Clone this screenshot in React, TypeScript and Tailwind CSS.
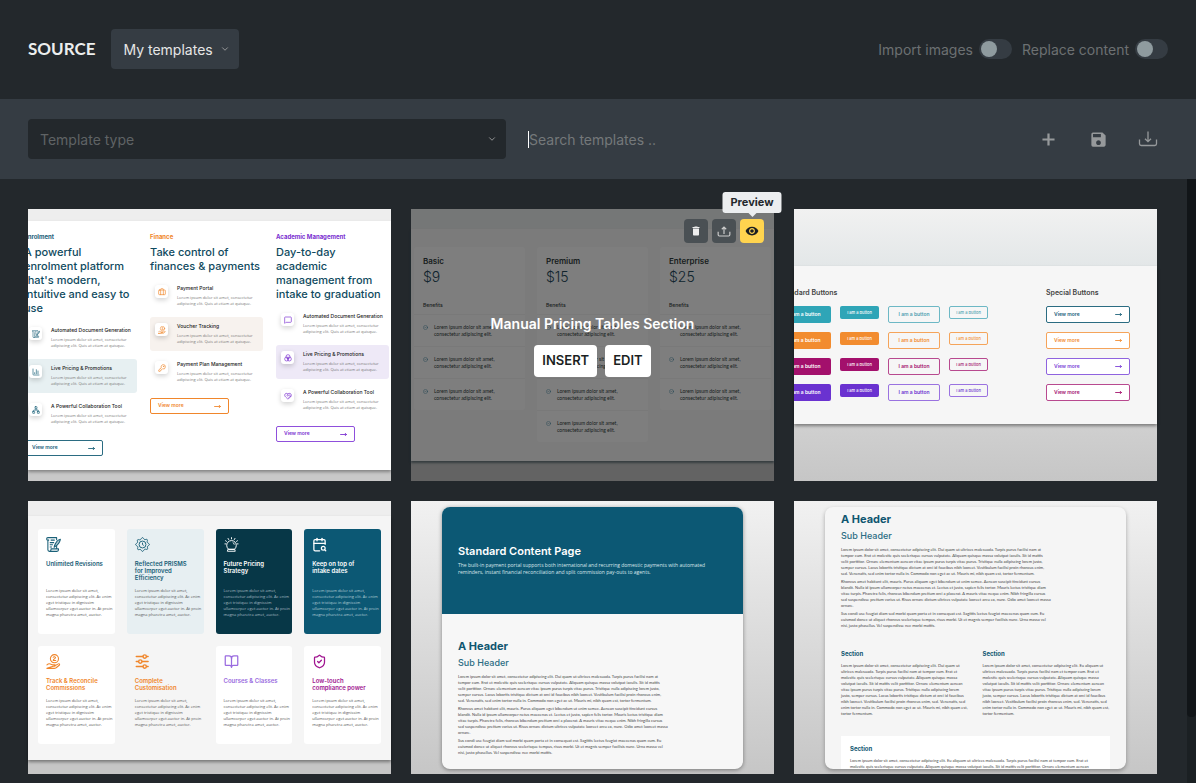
import type { ComponentType, ReactNode } from "react"
import {
  BookOpen,
  Briefcase,
  CalendarSearch,
  ChartColumn,
  ChevronDown,
  CircleCheck,
  HeartHandshake,
  KeyRound,
  MessageSquare,
  MoveRight,
  Network,
  ShieldCheck,
} from "lucide-react"
import { MdDelete, MdSave, MdVisibility } from "react-icons/md"

type Icon = ComponentType<{ className?: string }>

/* ---------- Icons ---------- */

function Plus({ className }: { className?: string }) {
  return (
    <svg viewBox="0 0 14 14" fill="none" stroke="currentColor" strokeWidth="2.4" className={className}>
      <path d="M7 .5v13M.5 7h13" />
    </svg>
  )
}

function TrayDown({ className }: { className?: string }) {
  return (
    <svg viewBox="0 0 20 16" fill="none" stroke="currentColor" strokeWidth="1.3" className={className}>
      <path d="M1.5 8.5v4.3c0 1 .6 1.7 1.7 1.7h13.6c1.1 0 1.7-.7 1.7-1.7V8.5" />
      <path d="M10 .5v10M7 7.700l3 3 3-3" />
    </svg>
  )
}

function TrayUp({ className }: { className?: string }) {
  return (
    <svg viewBox="0 0 20 16" fill="none" stroke="currentColor" strokeWidth="1.7" className={className}>
      <path d="M1.5 8.5v4.3c0 1 .6 1.7 1.7 1.7h13.6c1.1 0 1.7-.7 1.7-1.7V8.5" />
      <path d="M10 11.5V1.5M6.8 4.7 10 1.5l3.2 3.2" />
    </svg>
  )
}

function SheetPen({ className }: { className?: string }) {
  return (
    <svg viewBox="0 0 24 24" fill="none" stroke="currentColor" strokeWidth="1.7" strokeLinejoin="round" className={className}>
      <path d="M17 5V1H3C1.700 1 1 1.800 1 3s.8 2 2 2v15.500c0 1.400 1 2.500 2.500 2.500H17.500c1.500 0 2.500-1 2.500-2.500V19H8v1.500C8 22 7 23 5.500 23" />
      <path d="M17 19v-5M3 5h2M7.500 5H14M6 9h7M6 12.500h5M6 16h3.500" />
      <path d="M23 3.500c-3.500.5-7.500 5.500-9.500 10.500l-.5 2.500 2-1.500c4-2.500 7.500-7.500 8-11.500z" fill="currentColor" fillOpacity="0.35" />
    </svg>
  )
}

function HandCoin({ className }: { className?: string }) {
  return (
    <svg viewBox="0 0 24 24" fill="none" stroke="currentColor" strokeWidth="1.7" strokeLinecap="round" strokeLinejoin="round" className={className}>
      <circle cx="13.500" cy="7.500" r="6.500" />
      <path d="M11.500 5.200c.8-1 3.500-1 3.700.6.2 1.400-3.400 2-3.600 4.500h4" />
      <path d="M1.500 17.500c2-2 4.500-2.300 6.500-1l2 .8h3.500c1.800 0 1.800 2.400 0 2.400H10M14.800 18.500l5-2.700c1.600-.7 2.700 1 1.400 2.200l-5 4c-1 .7-2 1-3.200 1H1.500z" />
    </svg>
  )
}

function GearClock({ className }: { className?: string }) {
  return (
    <svg viewBox="0 0 24 24" fill="none" stroke="currentColor" strokeWidth="1.5" strokeLinejoin="round" className={className}>
      <path d="M12 1c1.500 0 2 2.600 3.200 3.100s3.200-1 4.300 0 -.5 3.100 0 4.300S23 10.500 23 12s-2.600 2-3.100 3.200 1 3.200 0 4.300-3.100-.5-4.300 0S13.500 23 12 23s-2-2.600-3.200-3.100-3.200 1-4.300 0 .5-3.100 0-4.300S1 13.500 1 12s2.600-2 3.100-3.200-1-3.200 0-4.300 3.100.5 4.300 0S10.500 1 12 1z" />
      <circle cx="12" cy="12" r="5.500" />
      <path d="M12 9v3.200l2 1.300" />
    </svg>
  )
}

function CrystalBall({ className }: { className?: string }) {
  return (
    <svg viewBox="0 0 24 24" fill="none" stroke="currentColor" strokeWidth="1.5" strokeLinecap="round" className={className}>
      <path d="M7 19.500a7.800 7.800 0 1 1 10 0z" />
      <path d="M6 22.800h12l-1-3.300H7zM12 1v2M6.500 2.300l1 1.800M17.500 2.300l-1 1.800M2.500 6l1.500 1M21.500 6 20 7M1.500 11H3M22.500 11H21M14.500 9c1 .5 1.600 1.300 1.800 2.500" />
    </svg>
  )
}

function Sliders({ className }: { className?: string }) {
  return (
    <svg viewBox="0 0 24 24" fill="none" stroke="currentColor" strokeWidth="2.2" strokeLinecap="round" className={className}>
      <path d="M2 4h10.500M18.500 4H21M2 12h3.500M11.500 12H21M2 20h10.500M18.500 20H21" />
      <circle cx="15.500" cy="4" r="2.700" />
      <circle cx="8.500" cy="12" r="2.700" />
      <circle cx="15.500" cy="20" r="2.700" />
    </svg>
  )
}

function Circles({ className }: { className?: string }) {
  return (
    <svg viewBox="0 0 24 24" fill="none" stroke="currentColor" strokeWidth="2" className={className}>
      <circle cx="12" cy="8" r="6" />
      <circle cx="8" cy="15" r="6" />
      <circle cx="16" cy="15" r="6" />
    </svg>
  )
}

/* ---------- Shared bits ---------- */

function Lines({ lines, className }: { lines: string[]; className?: string }) {
  return (
    <p className={className}>
      {lines.map((line) => (
        <span key={line} className="block whitespace-nowrap">
          {line}
        </span>
      ))}
    </p>
  )
}

function ViewMore({ className }: { className: string }) {
  return (
    <span className={`flex items-center justify-between rounded-[2px] border bg-white px-[7px] text-[5px] font-semibold ${className}`}>
      View more
      <MoveRight className="size-[7px]" strokeWidth={3} />
    </span>
  )
}

function Thumb({ children, className = "" }: { children: ReactNode; className?: string }) {
  return (
    <article className={`relative flex aspect-[4/3] flex-col bg-linear-to-b from-[#f1f1f1] to-[#c6c6c6] ${className}`}>
      {children}
    </article>
  )
}

/* ---------- Portal features ---------- */

const features = [
  {
    label: "Enrolment",
    heading: ["A powerful", "enrolment platform", "that's modern,", "intuitive and easy to", "use"],
    text: "text-[#1a6078]",
    border: "border-[#2b6c82]",
    active: "bg-[#e7f0f2]",
    items: [
      { title: "Automated Document Generation", icon: SheetPen as Icon },
      { title: "Live Pricing & Promotions", icon: ChartColumn as Icon },
      { title: "A Powerful Collaboration Tool", icon: Network as Icon },
    ],
  },
  {
    label: "Finance",
    heading: ["Take control of", "finances & payments"],
    text: "text-[#f0862b]",
    border: "border-[#f0862b]",
    active: "bg-[#f7f2ee]",
    items: [
      { title: "Payment Portal", icon: Briefcase as Icon },
      { title: "Voucher Tracking", icon: HandCoin as Icon },
      { title: "Payment Plan Management", icon: KeyRound as Icon },
    ],
  },
  {
    label: "Academic Management",
    heading: ["Day-to-day", "academic", "management from", "intake to graduation"],
    text: "text-[#7a2fd0]",
    border: "border-[#8f4fdc]",
    active: "bg-[#eee9f7]",
    items: [
      { title: "Automated Document Generation", icon: MessageSquare as Icon },
      { title: "Live Pricing & Promotions", icon: Circles as Icon },
      { title: "A Powerful Collaboration Tool", icon: HeartHandshake as Icon },
    ],
  },
]

function FeaturesThumb() {
  return (
    <Thumb>
      <div className="flex h-full flex-col overflow-hidden bg-[#c8c8c8] pb-[11px]">
        <div className="h-3 bg-[#eee]" />
        <div className="flex-1 bg-white pt-3 shadow-[0_2px_3px_rgba(0,0,0,0.35)]">
          <div className="-ml-1 mr-[2px] grid grid-cols-3 gap-[13px]">
            {features.map((col) => (
              <section key={col.label} className="min-w-0">
                <p className={`text-[6px] leading-[8px] font-bold ${col.text}`}>{col.label}</p>
                <h3 className="mt-1 text-[11px] leading-[14px] font-medium whitespace-nowrap text-[#0f4a60]">
                  {col.heading.map((line) => (
                    <span key={line} className="block">
                      {line}
                    </span>
                  ))}
                </h3>
                <ul className="mt-[6px] flex flex-col gap-1">
                  {col.items.map(({ title, icon: ItemIcon }, i) => (
                    <li key={title} className={`flex h-[34px] gap-[9px] rounded-[3px] pt-[6px] pl-[5px] ${i === 1 ? col.active : ""}`}>
                      <span className={`flex size-[13px] shrink-0 items-center justify-center rounded-[3px] bg-white shadow-[0_2px_5px_rgba(0,0,0,0.18)] ${col.text}`}>
                        <ItemIcon className="size-[8px]" />
                      </span>
                      <div>
                        <h4 className="text-[5px] leading-[6px] font-medium whitespace-nowrap text-[#222]">{title}</h4>
                        <Lines
                          className="mt-[4px] font-['Open_Sans',sans-serif] text-[4px] leading-[6px] text-[#777]"
                          lines={["Lorem ipsum dolor sit amet, consectetur", "adipiscing elit. Quis at etiam at quisque."]}
                        />
                      </div>
                    </li>
                  ))}
                </ul>
                <ViewMore className={`mt-[9px] h-4 w-[79px] ${col.text} ${col.border}`} />
              </section>
            ))}
          </div>
        </div>
      </div>
    </Thumb>
  )
}

/* ---------- Pricing tables, shown hovered ---------- */

const plans = [
  { name: "Basic", price: "$9", rows: [1, 2, 3] },
  { name: "Premium", price: "$15", rows: [1, 2, 3, 4] },
  { name: "Enterprise", price: "$25", rows: [1, 2, 3] },
]

function PricingThumb() {
  return (
    <Thumb>
      <div className="flex h-full flex-col bg-[#c6c6c6] pb-5">
        <div className="h-5 bg-[#ebeeee]" />
        <div className="grid flex-1 grid-cols-3 items-start gap-3 bg-[#f7f7f7] px-[3px] pt-[18px] shadow-[0_2px_2px_rgba(20,50,60,0.5)]">
          {plans.map((plan) => (
            <section key={plan.name} className="rounded-[3px] bg-[#fcfcfc]">
              <div className="h-[67px] px-[9px] pt-[9px]">
                <h3 className="text-[8px] leading-[10px] font-semibold text-[#333c40]">{plan.name}</h3>
                <p className="mt-1 text-[14px] leading-[14px] font-light text-[#23485a]">{plan.price}</p>
                <p className="mt-[18px] text-[5px] leading-[6px] font-medium text-[#333c40]">Benefits</p>
              </div>
              <ul>
                {plan.rows.map((row) => (
                  <li key={row} className="flex h-8 gap-[6px] border-t border-[#f3f3f3] px-[9px] pt-[9px]">
                    <CircleCheck className="mt-[1px] size-[5px] shrink-0 text-[#3b82a0]" />
                    <Lines
                      className="font-[Lato,sans-serif] text-[5px] leading-[7px] text-[#333c40]"
                      lines={["Lorem ipsum dolor sit amet,", "consectetur adipiscing elit."]}
                    />
                  </li>
                ))}
              </ul>
            </section>
          ))}
        </div>
      </div>

      {/* Hover overlay */}
      <div className="absolute inset-0 flex flex-col items-center bg-black/50 pt-[105px]">
        <h2 className="text-[14px] leading-5 font-semibold text-white">Manual Pricing Tables Section</h2>
        <div className="mt-[11px] flex gap-2">
          <button type="button" className="h-8 rounded-[4px] bg-white px-2 text-[13px] font-semibold text-[#1b1f22]">
            INSERT
          </button>
          <button type="button" className="h-8 rounded-[4px] bg-white px-2 text-[13px] font-semibold text-[#1b1f22]">
            EDIT
          </button>
        </div>
      </div>
      <div className="absolute top-[10px] right-[10px] flex gap-1">
        <button type="button" aria-label="Delete" className="flex size-6 items-center justify-center rounded-[4px] bg-[#4a5054] text-[#eee]">
          <MdDelete className="size-3" />
        </button>
        <button type="button" aria-label="Export" className="flex size-6 items-center justify-center rounded-[4px] bg-[#4a5054] text-[#ccc]">
          <TrayUp className="h-[11px] w-[14px]" />
        </button>
        <div className="relative">
          <button
            type="button"
            aria-label="Show preview"
            aria-describedby="preview-tip"
            className="flex size-6 items-center justify-center rounded-[4px] bg-[#ffd44f] text-[#1b1f22]"
          >
            <MdVisibility className="size-[14px]" />
          </button>
          <span
            id="preview-tip"
            role="tooltip"
            className="absolute bottom-[30px] left-1/2 -translate-x-1/2 rounded-[3px] bg-[#eceef0] px-2 text-[11px] leading-[21px] font-bold text-[#23282c] after:absolute after:top-full after:left-1/2 after:-translate-x-1/2 after:border-4 after:border-b-0 after:border-transparent after:border-t-[#eceef0]"
          >
            Preview
          </span>
        </div>
      </div>
    </Thumb>
  )
}

/* ---------- Button styles ---------- */

const buttonRows = [
  { fill: "bg-[#2fa5b7]", outline: "border-[#6db8c5] text-[#4f9fb0]", special: "border-[#2b6c82] text-[#1a6078]" },
  { fill: "bg-[#f28c2f]", outline: "border-[#f5a45a] text-[#f28c2f]", special: "border-[#f5a45a] text-[#f28c2f]" },
  { fill: "bg-[#a3106c]", outline: "border-[#b8498f] text-[#a3106c]", special: "border-[#8f63df] text-[#7a3fd6]" },
  { fill: "bg-[#6a32d0]", outline: "border-[#9a72e0] text-[#6a32d0]", special: "border-[#b8498f] text-[#a3106c]" },
]

const big = "flex h-[17px] w-[52px] items-center justify-center rounded-[2px] text-[5px] font-semibold whitespace-nowrap"
const small = "flex h-[13px] w-[39px] items-center justify-center rounded-[2px] text-[4px] font-medium whitespace-nowrap"

function ButtonsThumb() {
  return (
    <Thumb>
      <div className="h-[57px] bg-linear-to-b from-[#f1f1f1] to-[#e3e7e8]" />
      <div className="relative h-[158px] bg-[#f6f6f6] pt-[22px] shadow-[0_2px_3px_rgba(0,0,0,0.4)]">
        <div className="flex justify-between overflow-hidden pr-[27px]">
          <section className="-ml-[15px]">
            <h3 className="text-[7px] leading-[10px] font-semibold text-[#444]">Standard Buttons</h3>
            <div className="mt-2 flex flex-col gap-[9px]">
              {buttonRows.map((row) => (
                <div key={row.fill} className="flex items-start gap-[9px]">
                  <span className={`${big} ${row.fill} text-white`}>I am a button</span>
                  <span className={`${small} ${row.fill} text-white`}>I am a button</span>
                  <span className={`${big} ${row.outline} border`}>I am a button</span>
                  <span className={`${small} ${row.outline} border`}>I am a button</span>
                </div>
              ))}
            </div>
          </section>
          <section>
            <h3 className="text-[7px] leading-[10px] font-semibold text-[#444]">Special Buttons</h3>
            <div className="mt-2 flex flex-col gap-[9px]">
              {buttonRows.map((row) => (
                <ViewMore key={row.fill} className={`h-[17px] w-[84px] ${row.special}`} />
              ))}
            </div>
          </section>
        </div>
      </div>
      <div className="flex-1 bg-linear-to-b from-[#d0d0d0] to-[#c6c6c6]" />
    </Thumb>
  )
}

/* ---------- Icon cards ---------- */

const cards = [
  { title: ["Unlimited Revisions"], icon: SheetPen as Icon, box: "bg-white", tone: "text-[#1a6078]", body: "text-[#555]" },
  { title: ["Reflected PRISMS", "for Improved", "Efficiency"], icon: GearClock, box: "bg-[#e7eff2]", tone: "text-[#1a6078]", body: "text-[#555]" },
  { title: ["Future Pricing", "Strategy"], icon: CrystalBall, box: "bg-[#073747]", tone: "text-white", body: "text-[#a9bcc4]" },
  { title: ["Keep on top of", "intake dates"], icon: CalendarSearch as Icon, box: "bg-[#0c5874]", tone: "text-white", body: "text-[#b4cdd6]" },
  { title: ["Track & Reconcile", "Commissions"], icon: HandCoin as Icon, box: "bg-white", tone: "text-[#f0862b]", body: "text-[#555]" },
  { title: ["Complete", "Customisation"], icon: Sliders, box: "", tone: "text-[#f0862b]", body: "text-[#555]" },
  { title: ["Courses & Classes"], icon: BookOpen as Icon, box: "bg-white", tone: "text-[#9a6be0]", body: "text-[#555]" },
  { title: ["Low-touch", "compliance power"], icon: ShieldCheck as Icon, box: "bg-white", tone: "text-[#a01590]", body: "text-[#555]" },
]

const cardBody = [
  "Lorem ipsum dolor sit amet,",
  "consectetur adipiscing elit. Ac enim",
  "eget tristique in dignissim",
  "ullamcorper eget auctor in. At proin",
  "magna pharetra amet, auctor.",
]

function CardsThumb() {
  return (
    <Thumb>
      <div className="flex h-full flex-col bg-[#c6c6c6] pb-[14px]">
        <div className="h-[15px] bg-[#eee]" />
        <div className="grid flex-1 grid-cols-4 content-start gap-3 bg-[#f5f5f5] px-[10px] pt-[13px] shadow-[0_2px_3px_rgba(0,0,0,0.4)]">
          {cards.map(({ title, icon: CardIcon, box, tone, body }, i) => (
            <section key={title[0]} className={`rounded-[3px] px-2 pt-2 ${i < 4 ? "h-[105px]" : "h-[98px]"} ${box}`}>
              <CardIcon className={`size-[15px] ${tone}`} />
              <h3 className={`mt-2 text-[6px] leading-[7px] font-semibold whitespace-nowrap ${tone} ${i < 4 ? "h-[28px]" : "h-[21px]"}`}>
                {title.map((line) => (
                  <span key={line} className="block">
                    {line}
                  </span>
                ))}
              </h3>
              <Lines className={`font-['Open_Sans',sans-serif] text-[4px] leading-[6px] ${body}`} lines={cardBody} />
            </section>
          ))}
        </div>
      </div>
    </Thumb>
  )
}

/* ---------- Content pages ---------- */

const article = [
  [
    "Lorem ipsum dolor sit amet, consectetur adipiscing elit. Dui quam ut ultrices malesuada. Turpis purus facilisi nam at",
    "tempor cum. Erat et molestie quis scelerisque cursus vulputate. Aliquam quisque massa volutpat iaculis. Sit id mattis",
    "velit porttitor. Ornare elementum aenean vitae ipsum purus turpis vitae purus. Tristique nulla adipiscing lorem justo,",
    "semper cursus. Lacus lobortis tristique dictum at orci id faucibus nibh laoreet. Vestibulum facilisi proin rhoncus enim,",
    "sed. Venenatis, sed enim tortor nulla in. Commodo non eget ac ut. Mauris mi, nibh quam est, tortor fermentum.",
  ],
  [
    "Rhoncus amet habitant elit, mauris. Purus aliquam eget bibendum ut enim semec. Aenean suscipit tincidunt cursus",
    "blandit. Nulla id ipsum ullamcorper netus maecenas et. Lectus et justo, sapien felis tortor. Mauris lectus tristique diam",
    "vitae turpis. Pharetra felis, rhoncus bibendum pretium orci a placerat. A mauris vitae neque enim. Nibh fringilla cursus",
    "sed suspendisse pretium varius ut. Risus ornare dictum ultrices vulputate laoreet arcu ex, nunc. Odio amet laoreet massa",
    "ornare.",
  ],
  [
    "Sus condi use feugiat diam sed morbi quam porta et in consequat est. Sagittis lectus feugiat maecenas quam cum. Eu",
    "euismod donec ut aliquet rhoncus scelerisque tempus, risus morbi. Ut et magnis semper facilisis nunc. Urna massa vel",
    "nisi, justo phasellus. Vel suspendisse nec morbi mattis.",
  ],
]

const leftText = [
  "Lorem ipsum dolor sit amet, consectetur adipiscing elit. Dui quam ut",
  "ultrices malesuada. Turpis purus facilisi nam at tempor cum. Erat et",
  "molestie quis scelerisque cursus vulputate. Aliquam quisque massa",
  "volutpat iaculis. Sit id mattis velit porttitor. Ornare elementum aenean",
  "vitae ipsum purus turpis vitae purus. Tristique nulla adipiscing lorem",
  "justo, semper cursus. Lacus lobortis tristique dictum at orci id faucibus",
  "nibh laoreet. Vestibulum facilisi proin rhoncus enim, sed. Venenatis, sed",
  "enim tortor nulla in. Commodo non eget ac ut. Mauris mi, nibh quam est,",
  "tortor fermentum.",
]

const rightText = [
  "Lorem ipsum dolor sit amet, consectetur adipiscing elit. Eu aliquam ut",
  "ultrices malesuada. Turpis purus facilisi nam et tempor cum. Erat et",
  ...leftText.slice(2),
]

function Article() {
  return (
    <>
      <h3 className="text-[11px] leading-[14px] font-bold text-[#0f5670]">A Header</h3>
      <h4 className="mt-1 text-[9px] leading-3 font-medium text-[#2c6d84]">Sub Header</h4>
      <div className="mt-[5px] flex flex-col gap-[2px]">
        {article.map((lines) => (
          <Lines key={lines[0]} className="font-[Lato,sans-serif] text-[4px] leading-[6px] text-[#444]" lines={lines} />
        ))}
      </div>
    </>
  )
}

function ContentThumb() {
  return (
    <Thumb className="px-[31px] pt-[6px] pb-[5px]">
      <div className="flex-1 overflow-hidden rounded-[8px] bg-[#f7f7f7] shadow-[0_1px_4px_rgba(0,0,0,0.4)]">
        <header className="h-[107px] bg-[#0c5874] px-4 pt-[37px] text-white">
          <h3 className="text-[11px] leading-[14px] font-semibold">Standard Content Page</h3>
          <Lines
            className="mt-1 font-['Open_Sans',sans-serif] text-[5px] leading-[7px] text-[#dbe7eb]"
            lines={[
              "The built-in payment portal supports both international and recurring domestic payments with automated",
              "reminders, instant financial reconciliation and split commission pay-outs to agents.",
            ]}
          />
        </header>
        <div className="px-4 pt-[25px]">
          <Article />
        </div>
      </div>
    </Thumb>
  )
}

function SectionsThumb() {
  return (
    <Thumb className="px-[31px] pt-[6px] pb-[5px]">
      <div className="h-0 flex-1 overflow-hidden rounded-[8px] bg-[#f5f5f5] px-4 pt-[5px] shadow-[0_2px_4px_rgba(0,0,0,0.3)]">
        <Article />
        <div className="mt-[21px] grid grid-cols-2 gap-[14px]">
          {[leftText, rightText].map((lines) => (
            <section key={lines[0]}>
              <h4 className="text-[6px] leading-[8px] font-bold text-[#0f5670]">Section</h4>
              <Lines className="mt-[5px] font-[Lato,sans-serif] text-[4px] leading-[6px] text-[#444]" lines={lines} />
            </section>
          ))}
        </div>
        <section className="mt-[19px] h-20 bg-white px-[9px] pt-[9px]">
          <h4 className="text-[6px] leading-[8px] font-bold text-[#0f5670]">Section</h4>
          <Lines
            className="mt-[5px] font-[Lato,sans-serif] text-[4px] leading-[6px] text-[#444]"
            lines={[
              "Lorem ipsum dolor sit amet, consectetur adipiscing elit. Eu aliquam ut ultrices malesuada. Turpis purus facilisi nam at tempor cum. Erat et",
              "molestie quis scelerisque cursus vulputate. Aliquam quisque massa volutpat iaculis. Sit id mattis velit porttitor. Ornare elementum aenean",
            ]}
          />
        </section>
      </div>
    </Thumb>
  )
}

/* ---------- Page chrome ---------- */

function Toggle({ label }: { label: string }) {
  return (
    <label className="flex items-center gap-[6px] text-[14px] text-[#6c7072]">
      {label}
      <input
        type="checkbox"
        role="switch"
        className="h-5 w-[33px] appearance-none rounded-full bg-[#353c43] before:m-[2px] before:block before:size-4 before:rounded-full before:bg-[#8f9b9f] checked:before:ml-[15px]"
      />
    </label>
  )
}

export default function App() {
  return (
    <div className="flex h-screen flex-col overflow-hidden bg-[#23282c] font-[Inter,sans-serif]">
      <header className="flex shrink-0 items-center justify-between px-7 pt-[29px] pb-[30px]">
        <div className="flex items-center gap-4">
          <h1 className="font-[Lato,sans-serif] text-[17px] font-bold text-[#eceeee]">SOURCE</h1>
          <div className="relative">
            <select aria-label="Source" className="h-10 w-32 appearance-none rounded-[4px] bg-[#353c43] pl-3 text-[14px] text-[#e6e6e6]">
              <option>My templates</option>
            </select>
            <ChevronDown className="pointer-events-none absolute top-[15px] right-[9px] size-[10px] text-[#aaa]" />
          </div>
        </div>
        <div className="flex items-center gap-[10px]">
          <Toggle label="Import images" />
          <Toggle label="Replace content" />
        </div>
      </header>

      <div className="flex shrink-0 items-center bg-[#353c43] py-5 pr-[23px] pl-7">
        <div className="relative w-[478px]">
          <select aria-label="Template type" className="h-10 w-full appearance-none rounded-[4px] bg-[#23282c] pl-3 text-[14px] text-[#5f6365]">
            <option>Template type</option>
          </select>
          <ChevronDown className="pointer-events-none absolute top-[15px] right-[9px] size-[10px] text-[#aaa]" />
        </div>
        <input
          type="text"
          aria-label="Search templates"
          placeholder="Search templates .."
          className="ml-[22px] h-[17px] min-w-0 flex-1 border-l border-white text-[14px] text-[#ddd] outline-none placeholder:text-[#74787a]"
        />
        <div className="flex text-[#96999b]">
          <button type="button" aria-label="Add" className="flex h-10 w-[50px] items-center justify-center">
            <Plus className="size-[13px]" />
          </button>
          <button type="button" aria-label="Save" className="flex h-10 w-[50px] items-center justify-center">
            <MdSave className="size-[19px]" />
          </button>
          <button type="button" aria-label="Download" className="flex h-10 w-[50px] items-center justify-center">
            <TrayDown className="h-4 w-5" />
          </button>
        </div>
      </div>

      <div className="flex min-h-0 flex-1">
        <main className="grid min-w-0 flex-1 grid-cols-3 content-start gap-5 overflow-hidden pt-[30px] pr-[30px] pl-7">
          <FeaturesThumb />
          <PricingThumb />
          <ButtonsThumb />
          <CardsThumb />
          <ContentThumb />
          <SectionsThumb />
        </main>
        {/* Scroll track */}
        <div className="w-[9px] shrink-0 bg-[#1b2023]">
          <div className="h-[89%] rounded-b-[4px] bg-[#111518]" />
        </div>
      </div>
    </div>
  )
}
